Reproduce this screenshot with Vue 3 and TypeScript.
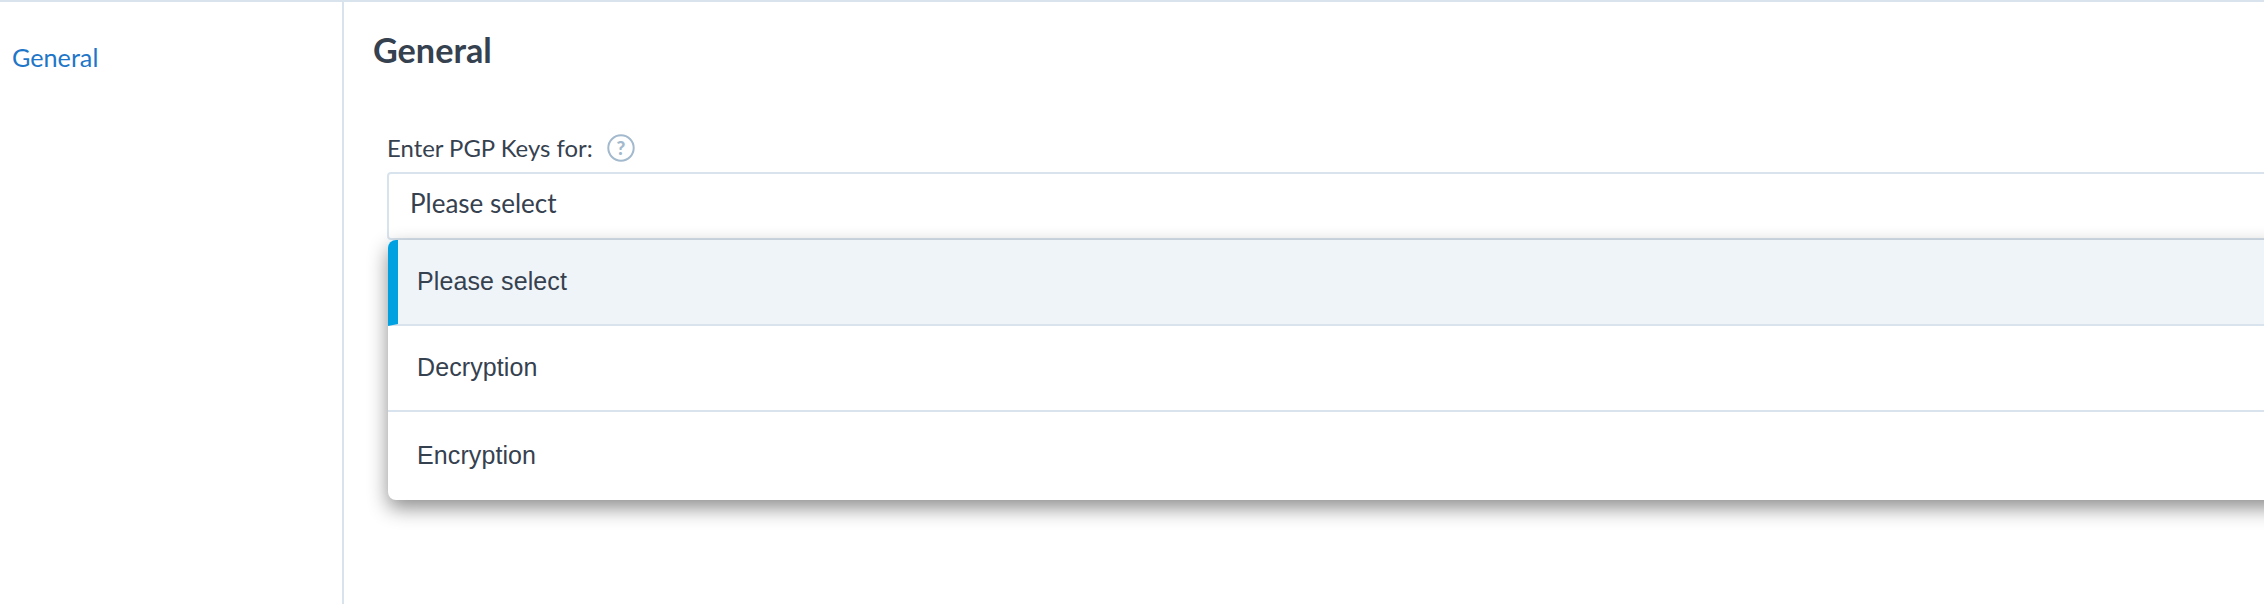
<script setup lang="ts">
const options: string[] = ['Please select', 'Decryption', 'Encryption']
</script>

<template>
  <div class="page">
    <aside class="side">
      <a class="side-link">General</a>
    </aside>
    <main class="main">
      <h1 class="title">General</h1>
      <div class="field">
        <div class="label-row">
          <label class="label">Enter PGP Keys for:</label>
          <svg class="help" width="28" height="28" viewBox="0 0 28 28">
            <circle cx="14" cy="14" r="12.7" fill="none" stroke="#a3b9cd" stroke-width="2" />
            <text x="14" y="20.5" text-anchor="middle" class="help-q">?</text>
          </svg>
        </div>
        <div class="select">
          <div class="control">Please select</div>
          <ul class="menu">
            <li v-for="(o, i) in options" :key="o" class="item" :class="{ active: i === 0 }">{{ o }}</li>
          </ul>
        </div>
      </div>
    </main>
  </div>
</template>

<style>
html, body { margin: 0; overflow: hidden; background: #fff; }
</style>

<style scoped>
.page {
  display: flex;
  width: 2264px;
  height: 604px;
  box-sizing: border-box;
  border-top: 2px solid #d8e3ee;
  background: #fff;
  overflow: hidden;
  font-family: Lato, "Noto Sans", sans-serif;
  color: #36414f;
}
.side {
  width: 344px;
  flex: none;
  box-sizing: border-box;
  border-right: 2px solid #d8e3ee;
  padding: 40px 0 0 12px;
}
.side-link {
  display: block;
  font-size: 25.2px;
  line-height: 30px;
  color: #1f76c8;
}
.main {
  flex: 1;
  min-width: 0;
  padding: 0 0 0 29px;
}
.title {
  margin: 29px 0 0;
  font-size: 34.2px;
  line-height: 38px;
  font-weight: 700;
  color: #36414f;
}
.field {
  margin: 64px -60px 0 14px;
}
.label-row {
  display: flex;
  align-items: center;
  gap: 14px;
  height: 30px;
  margin-bottom: 9px;
}
.label {
  font-size: 23.9px;
  line-height: 30px;
}
.help { flex: none; }
.help-q {
  font-family: Lato, sans-serif;
  font-size: 19px;
  font-weight: 900;
  fill: #a3b9cd;
}
.select { position: relative; }
.control {
  box-sizing: border-box;
  height: 68px;
  padding: 14px 21px;
  border: 2px solid #d8e3ee;
  border-radius: 4px;
  font-size: 26px;
  line-height: 30px;
  background: #fff;
}
.menu {
  position: absolute;
  top: 68px;
  left: 1px;
  right: 0;
  margin: 0;
  padding: 0;
  list-style: none;
  background: #fff;
  border-radius: 8px 0 8px 8px;
  box-shadow: 0 8px 20px rgba(0, 0, 0, 0.45);
  overflow: hidden;
  font-family: "Liberation Sans", Arial, sans-serif;
}
.item {
  box-sizing: border-box;
  display: flex;
  align-items: center;
  height: 86px;
  padding: 0 0 2px 29px;
  font-size: 25px;
  border-bottom: 2px solid #d8e3ee;
  letter-spacing: 0.1px;
}
.item:last-child {
  height: 88px;
  border-bottom: 0;
}
.item.active {
  background: #eff4f8;
  border-left: 10px solid #00a1e0;
  padding-left: 19px;
}
</style>
